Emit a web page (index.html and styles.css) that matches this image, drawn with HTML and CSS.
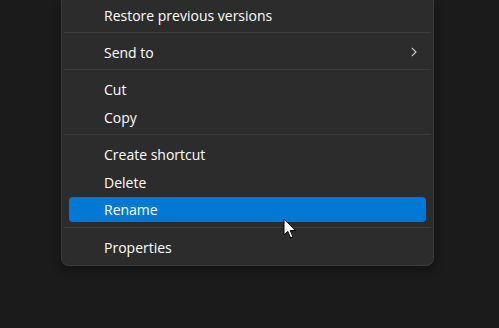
FILE: index.html
```html
<!DOCTYPE html>
<html lang="en">
<head>
    <meta charset="UTF-8">
    <title>Context menu</title>
    <link rel="stylesheet" href="styles.css">
</head>
<body>
  <div class="menu">
    <div class="item">Restore previous versions</div>
    <div class="sep"></div>
    <div class="item">
      <span>Send to</span>
      <svg class="chevron" width="6" height="10" viewBox="0 0 6 10">
        <path d="M0.8 0.8 L5 5 L0.8 9.2" fill="none" stroke="#d0d0d0" stroke-width="1.1"/>
      </svg>
    </div>
    <div class="sep"></div>
    <div class="item">Cut</div>
    <div class="item">Copy</div>
    <div class="sep"></div>
    <div class="item">Create shortcut</div>
    <div class="item">Delete</div>
    <div class="item active"><span class="label">Rename</span></div>
    <div class="sep"></div>
    <div class="item">Properties</div>

    <svg class="cursor" width="14" height="22" viewBox="0 0 14 22">
      <path d="M1 1 L1 17 L4.8 13.4 L7.6 20 L10 19 L7.3 12.6 L12.5 12.6 Z" fill="#fff" stroke="#000" stroke-width="1"/>
    </svg>
  </div>
</body>
</html>
```

FILE: styles.css
```css
body {
    margin: 0;
    background: #1b1b1b;
    font-family: "Open Sans", "Noto Sans", sans-serif;
    font-size: 14px;
    color: #fff;
    height: 328px;
    overflow: hidden;
}
.menu {
    position: relative;
    margin-left: 61px;
    width: 357px;
    background: #2c2c2c;
    border: 1px solid #3b3b3b;
    border-top: none;
    border-radius: 0 0 8px 8px;
    padding: 0 7px 5px;
    box-shadow: 0 4px 10px rgba(0, 0, 0, 0.35);
}
.item {
    height: 28px;
    box-sizing: border-box;
    padding: 2px 9px 0 35px;
    display: flex;
    align-items: center;
    justify-content: space-between;
    border-radius: 4px;
}
/* highlight is inset 2px inside the 28px row */
.item.active {
    padding: 2px 0;
}
.item.active .label {
    display: flex;
    align-items: center;
    width: 100%;
    height: 24px;
    padding: 1px 0 0 35px;
    background: #0078d4;
    border-radius: 4px;
}
.sep {
    height: 9px;
    margin: 0 -5px;
    background: linear-gradient(#3d3d3d, #3d3d3d) center / 100% 1px no-repeat;
}
.chevron {
    display: block;
}
.cursor {
    position: absolute;
    left: 221px;
    top: 218px;
}
```
